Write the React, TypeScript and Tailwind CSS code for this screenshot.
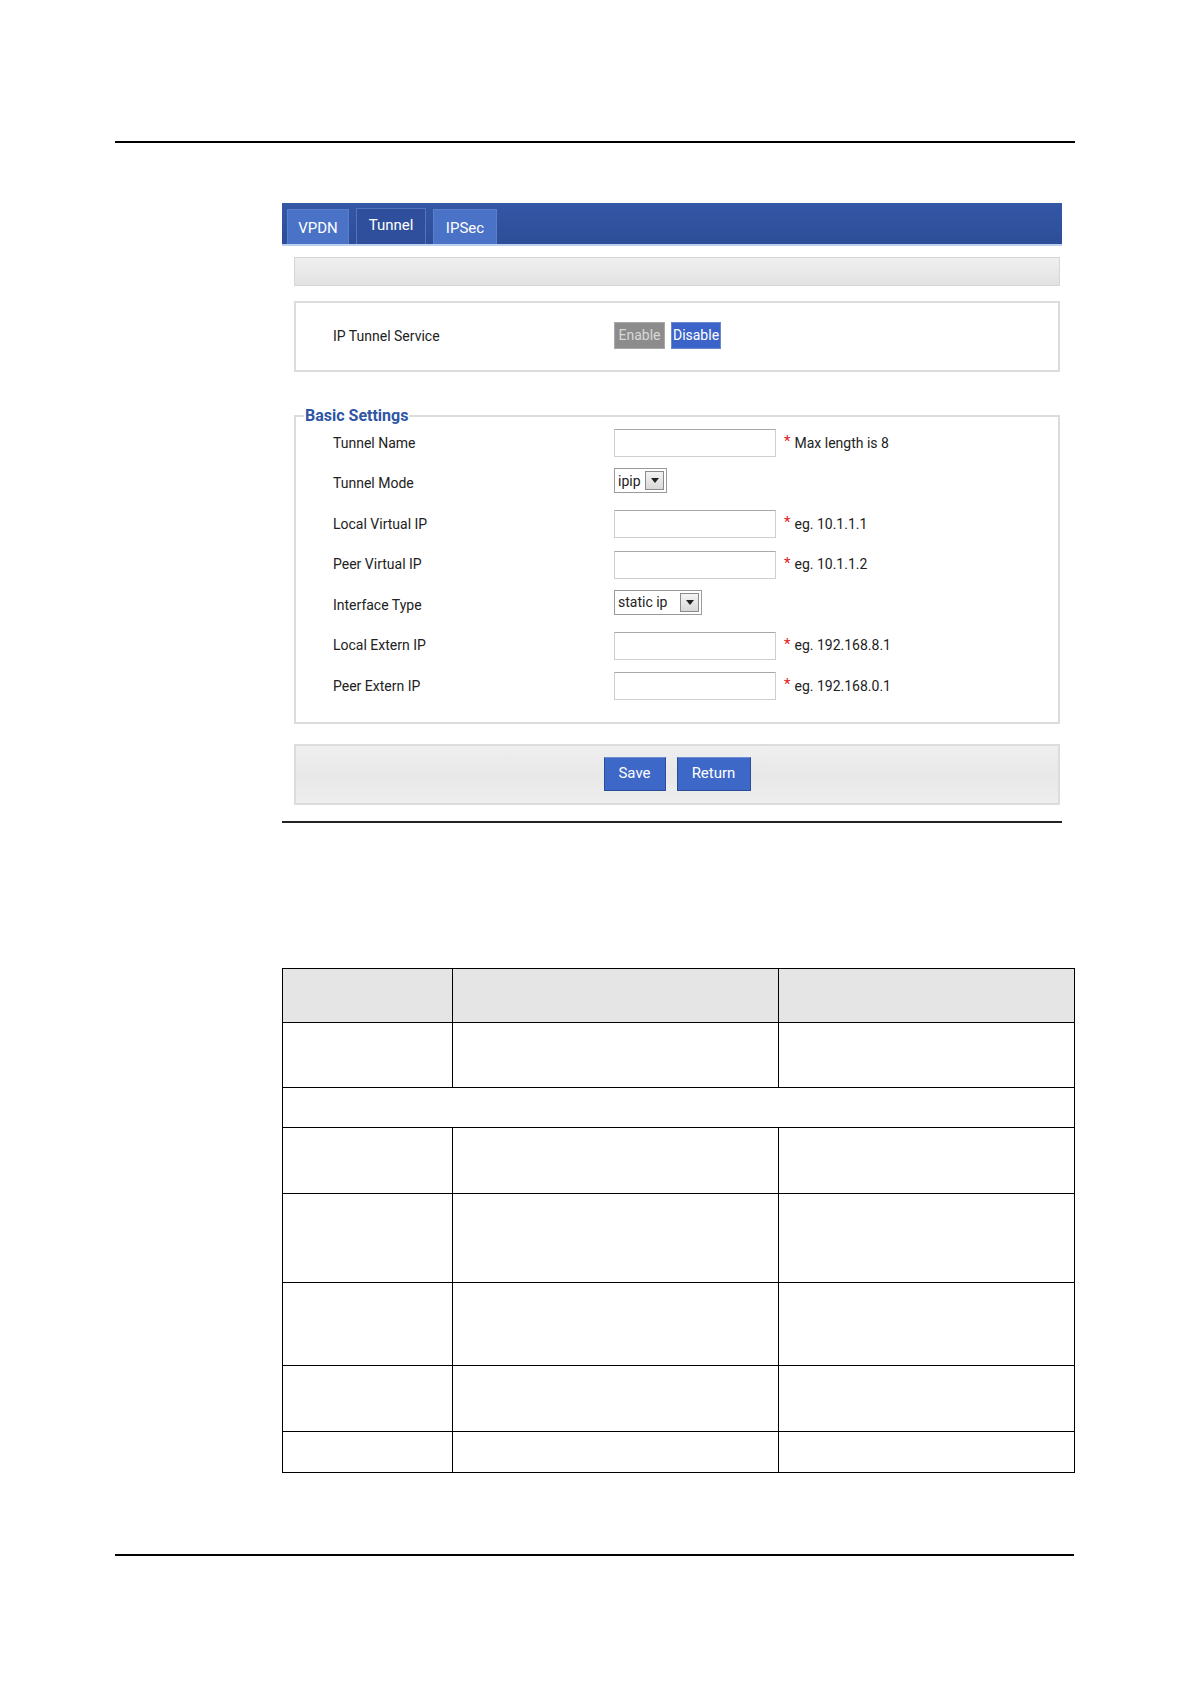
import React from 'react';

const font = { fontFamily: 'Roboto, "Liberation Sans", sans-serif' };

const rows: { label: string; kind: 'input' | 'select'; value?: string; width?: string; hint?: string }[] = [
  { label: 'Tunnel Name', kind: 'input', hint: 'Max length is 8' },
  { label: 'Tunnel Mode', kind: 'select', value: 'ipip', width: 'w-[53px]' },
  { label: 'Local Virtual IP', kind: 'input', hint: 'eg. 10.1.1.1' },
  { label: 'Peer Virtual IP', kind: 'input', hint: 'eg. 10.1.1.2' },
  { label: 'Interface Type', kind: 'select', value: 'static ip', width: 'w-[88px]' },
  { label: 'Local Extern IP', kind: 'input', hint: 'eg. 192.168.8.1' },
  { label: 'Peer Extern IP', kind: 'input', hint: 'eg. 192.168.0.1' },
];

// row heights of the parameter table (px)
const tableRows = [54, 65, 40, 66, 89, 83, 66, 41];

function FakeSelect({ value, width }: { value: string; width: string }) {
  return (
    <div className={`${width} h-[25px] flex items-center justify-between border border-[#9a9a9a] bg-white pl-[3px] pr-[2px]`}>
      <span className="text-[14px] text-[#222] leading-none">{value}</span>
      <span className="w-[19px] h-[19px] border border-[#8a8a8a] bg-gradient-to-b from-[#f4f4f4] to-[#d8d8d8] flex items-center justify-center">
        <svg width="8" height="5" viewBox="0 0 8 5">
          <path d="M0 0 H8 L4 5 Z" fill="#222" />
        </svg>
      </span>
    </div>
  );
}

export default function App() {
  return (
    <div className="w-[1188px] h-[1681px] bg-white pt-[141px]" style={font}>
      <div className="ml-[115px] w-[960px] border-t-2 border-black" />

      {/* device web page screenshot */}
      <div className="ml-[282px] w-[780px] mt-[60px]">
        <div className="h-[43px] bg-gradient-to-b from-[#3457a6] to-[#2d4d98] border-b-2 border-[#bcd0ee] flex items-end gap-[7px] pl-[5px]">
          <div className="w-[62px] h-[35px] bg-[#4a72c6] border border-[#5a80cc] border-b-0 flex items-center justify-center text-white text-[15px] pt-[2px]">
            VPDN
          </div>
          <div className="w-[70px] h-[36px] bg-[#2f4f9c] border border-[#5573b8] border-b-0 flex items-center justify-center text-white text-[15px] pb-[2px]">
            Tunnel
          </div>
          <div className="w-[64px] h-[35px] bg-[#4a72c6] border border-[#5a80cc] border-b-0 flex items-center justify-center text-white text-[15px] pt-[2px]">
            IPSec
          </div>
        </div>

        <div className="pl-[12px] pr-[2px]">
          <div className="mt-[11px] h-[29px] border border-[#d6d6d6] bg-gradient-to-b from-[#efefef] via-[#e9e9e9] to-[#e2e2e2]" />

          <div className="mt-[15px] h-[71px] border-2 border-[#dcdcdc] flex items-center">
            <span className="ml-[37px] w-[281px] text-[14px] text-[#222]">IP Tunnel Service</span>
            <div className="flex gap-[6px] -mt-[2px]">
              <span className="w-[51px] h-[27px] bg-[#8c8c8c] border border-[#a8a8a8] text-[#d8d8d8] text-[14px] flex items-center justify-center">
                Enable
              </span>
              <span className="w-[50px] h-[27px] bg-[#3c64c8] border border-[#6a88d0] text-white text-[14px] flex items-center justify-center">
                Disable
              </span>
            </div>
          </div>

          <fieldset className="mt-[36px] border-2 border-[#dcdcdc] pb-[22px]">
            <legend className="ml-[8px] px-[1px] text-[16px] font-bold text-[#2f55a5] leading-none">Basic Settings</legend>
            <div className="flex flex-col gap-[12.5px] mt-[5px] pl-[37px]">
              {rows.map((r) => (
                <div key={r.label} className="h-[28px] flex items-center">
                  <span className="w-[281px] text-[14px] text-[#222]">{r.label}</span>
                  {r.kind === 'input' ? (
                    <>
                      <div className="w-[162px] h-[28px] border border-[#cfcfcf] border-t-[#a9a9a9] bg-white" />
                      <span className="ml-[8px] text-[#e02020] text-[15px] leading-none -mt-[3px]">*</span>
                      <span className="ml-[4px] text-[14px] text-[#222]">{r.hint}</span>
                    </>
                  ) : (
                    <div className="-mt-[6px]">
                      <FakeSelect value={r.value!} width={r.width!} />
                    </div>
                  )}
                </div>
              ))}
            </div>
          </fieldset>

          <div className="mt-[20px] h-[61px] border-2 border-[#dcdcdc] bg-gradient-to-b from-[#efefef] via-[#e8e8e8] to-[#eeeeee] flex items-center justify-center gap-[11px] pb-[2px]">
            <span className="w-[62px] h-[34px] bg-[#3e68c8] border border-[#2c4d98] border-t-[#6e8ed6] text-white text-[15px] flex items-center justify-center">
              Save
            </span>
            <span className="w-[74px] h-[34px] bg-[#3e68c8] border border-[#2c4d98] border-t-[#6e8ed6] text-white text-[15px] flex items-center justify-center">
              Return
            </span>
          </div>
        </div>

        <div className="mt-[16px] border-t-2 border-[#222]" />
      </div>

      {/* parameter table */}
      <table className="ml-[282px] mt-[145px] w-[793px] border-collapse">
        <tbody>
          {tableRows.map((h, i) =>
            i === 2 ? (
              <tr key={i} style={{ height: h }}>
                <td colSpan={3} className="border-[1.5px] border-black" />
              </tr>
            ) : (
              <tr key={i} style={{ height: h }} className={i === 0 ? 'bg-[#e5e5e5]' : ''}>
                <td className="w-[170px] border-[1.5px] border-black" />
                <td className="w-[326px] border-[1.5px] border-black" />
                <td className="border-[1.5px] border-black" />
              </tr>
            )
          )}
        </tbody>
      </table>

      <div className="ml-[115px] w-[959px] mt-[81px] border-t-2 border-black" />
    </div>
  );
}
